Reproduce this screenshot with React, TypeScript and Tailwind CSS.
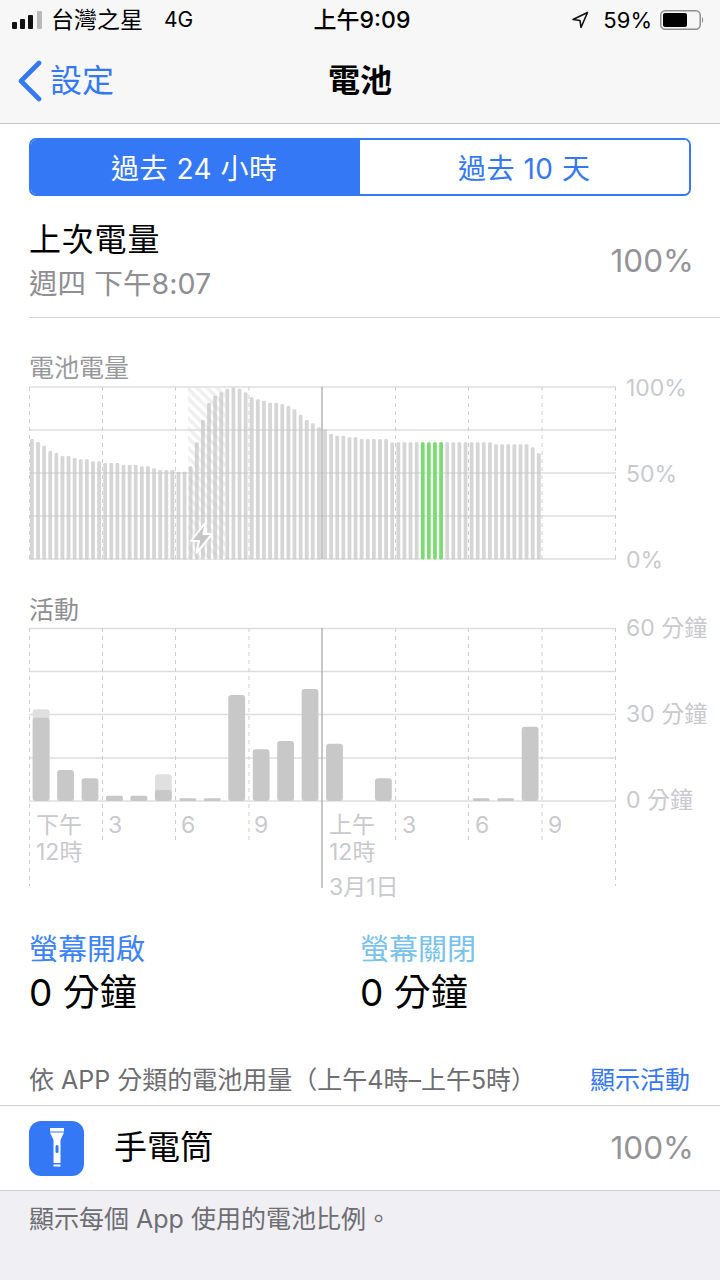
const SANS = "font-['Inter','Noto_Sans_CJK_TC','Noto_Sans',sans-serif]"

const batteryTops = [
	297, 306, 317, 333, 339, 348, 348, 354, 358, 358, 364, 364, 369, 369, 369, 374, 374, 374, 379, 379, 385, 390, 390, 390, 395, 395,
	379, 307, 240, 188, 167, 157, 146, 143, 146, 157, 172, 178, 182, 188, 188, 192, 198, 208, 224, 240, 250, 262, 268, 282, 287, 287, 292, 292,
	297, 297, 297, 297, 297, 307, 307, 307, 307, 307, 307, 307, 307, 307, 307, 307, 307, 307, 307, 307, 307, 307, 313, 313, 313, 313, 313, 313, 322, 340,
]
const greenBars = [64, 65, 66, 67]

// dark top, light top (zoomed values, y = 590 + v / 3)
const activityBars: { i: number; top: number; light?: number }[] = [
	{ i: 0, top: 383, light: 358 },
	{ i: 1, top: 540 },
	{ i: 2, top: 565 },
	{ i: 3, top: 617 },
	{ i: 4, top: 617 },
	{ i: 5, top: 600, light: 553 },
	{ i: 6, top: 625 },
	{ i: 7, top: 625 },
	{ i: 8, top: 315 },
	{ i: 9, top: 478 },
	{ i: 10, top: 453 },
	{ i: 11, top: 297 },
	{ i: 12, top: 461 },
	{ i: 14, top: 565 },
	{ i: 18, top: 625 },
	{ i: 19, top: 625 },
	{ i: 20, top: 410 },
]

const ticks = [29.5, 102.5, 175.5, 249, 395.5, 468.5, 542, 615.5]

function StatusBar() {
	return (
		<div className="flex h-[40px] items-center justify-between pl-[12px] pr-[16px] text-[23px] text-black">
			<div className="flex w-[244px] items-center">
				<svg width="31" height="18" viewBox="0 0 31 18" className="mr-[8px]">
					<rect x="0" y="11" width="5" height="7" rx="1" fill="#111" />
					<rect x="8" y="8" width="5" height="10" rx="1" fill="#111" />
					<rect x="16" y="4" width="5" height="14" rx="1" fill="#111" />
					<rect x="25" y="0" width="5" height="18" rx="1" fill="#b9b9b9" />
				</svg>
				<span>台灣之星</span>
				<span className="ml-[21px] text-[21px]">4G</span>
			</div>
			<div className="text-[23px] font-medium">上午9:09</div>
			<div className="flex w-[236px] items-center justify-end">
				<svg width="18" height="18" viewBox="0 0 18 18" className="mr-[14px]">
					<path d="M16.5 1.5 L2 8.5 L9 9.5 L10 16.5 Z" fill="none" stroke="#111" strokeWidth="1.6" strokeLinejoin="round" />
				</svg>
				<span className="mr-[8px] text-[22px]">59%</span>
				<svg width="44" height="20" viewBox="0 0 44 20">
					<rect x="0.75" y="0.75" width="39.5" height="18.5" rx="4.5" fill="none" stroke="#8e8e8e" strokeWidth="1.5" />
					<rect x="3" y="3" width="24" height="14" rx="2" fill="#000" />
					<path d="M42 7 C43.5 7.5 43.5 12.5 42 13 Z" fill="#8e8e8e" />
				</svg>
			</div>
		</div>
	)
}

function NavBar() {
	return (
		<div className="relative flex h-[84px] items-center justify-center border-b border-[#c4c4c6] pb-[2px]">
			<div className="absolute left-[17px] top-[20px] flex items-center text-[#3478f6]">
				<svg width="25" height="42" viewBox="0 0 25 42">
					<path d="M22 3 L4 21 L22 39" fill="none" stroke="currentColor" strokeWidth="4.6" strokeLinecap="round" strokeLinejoin="round" />
				</svg>
				<span className="ml-[8px] text-[32px] leading-none">設定</span>
			</div>
			<span className="text-[32px] font-semibold leading-none text-black">電池</span>
		</div>
	)
}

function AxisLabels({ labels }: { labels: string[] }) {
	return (
		<div className="-mt-[6px] flex h-[200px] flex-col justify-between pl-[6px] text-[23px] leading-[28px] text-[#c9c9ce]">
			{labels.map((label) => (
				<div key={label} className="whitespace-nowrap">{label}</div>
			))}
		</div>
	)
}

function BatteryChart() {
	return (
		<div className="flex items-start">
			<svg width="620" height="190" viewBox="0 380 620 190" className="block shrink-0">
				<defs>
					<pattern id="hatch" width="7" height="7" patternUnits="userSpaceOnUse" patternTransform="rotate(45)">
						<rect width="7" height="3.5" fill="#efefef" />
					</pattern>
				</defs>
				{[387, 430, 473, 516, 559].map((y) => (
					<line key={y} x1="29" x2="616" y1={y} y2={y} stroke="#dedede" strokeWidth="1.5" />
				))}
				{ticks.map((x) => (
					<line key={x} x1={x} x2={x} y1="387" y2="559" stroke="#cfcfcf" strokeWidth="1" strokeDasharray="4 4" />
				))}
				<rect x="188" y="388" width="37" height="171" fill="#ffffff" />
				<rect x="188" y="388" width="37" height="171" fill="url(#hatch)" />
				<line x1="188" x2="225" y1="430" y2="430" stroke="#dedede" strokeWidth="1.5" />
				<line x1="188" x2="225" y1="473" y2="473" stroke="#dedede" strokeWidth="1.5" />
				<line x1="188" x2="225" y1="516" y2="516" stroke="#dedede" strokeWidth="1.5" />
				<line x1="322" x2="322" y1="387" y2="559" stroke="#a3a3a3" strokeWidth="1.2" />
				{batteryTops.map((t, i) => {
					const x = 30 + i * 6.107
					const y = 340 + t / 3
					const green = greenBars.includes(i)
					return <rect key={i} x={x} y={y} width="3.8" height={559.5 - y} rx="1.4" fill={green ? "#7cdc74" : "#c7c7c7"} fillOpacity={green ? 1 : 0.73} />
				})}
				<path d="M206 522 L191 541 L199 541 L196.5 553 L212 534 L203.5 534 Z" fill="#c6c6c6" stroke="#ffffff" strokeWidth="2" strokeLinejoin="round" />
			</svg>
			<AxisLabels labels={["100%", "50%", "0%"]} />
		</div>
	)
}

function ActivityChart() {
	return (
		<div className="flex items-start">
			<svg width="620" height="280" viewBox="0 620 620 280" className="block shrink-0">
				{[628.5, 671.5, 714.5, 758, 801].map((y) => (
					<line key={y} x1="29" x2="616" y1={y} y2={y} stroke="#dedede" strokeWidth="1.5" />
				))}
				{ticks.map((x, i) => (
					<line key={x} x1={x} x2={x} y1="628" y2={i === 0 || i === 7 ? 886 : 844} stroke="#cfcfcf" strokeWidth="1" strokeDasharray="4 4" />
				))}
				<line x1="322" x2="322" y1="628" y2="888" stroke="#a3a3a3" strokeWidth="1.2" />
				{activityBars.map((b) => {
					const x = 32.7 + b.i * 24.45
					const y = 590 + b.top / 3
					return (
						<g key={b.i}>
							{b.light !== undefined && <rect x={x} y={590 + b.light / 3} width="16.8" height={801 - (590 + b.light / 3)} rx="3" fill="#e0e0e0" />}
							<rect x={x} y={y} width="16.8" height={801 - y} rx={801 - y < 6 ? 1.5 : 3} fill="#c8c8c8" />
						</g>
					)
				})}
				<g fill="#c9c9ce" fontSize="23">
					<text x="36" y="833">下午</text>
					<text x="36" y="860">12時</text>
					<text x="108" y="833">3</text>
					<text x="181" y="833">6</text>
					<text x="254" y="833">9</text>
					<text x="329" y="833">上午</text>
					<text x="329" y="860">12時</text>
					<text x="329" y="895">3月1日</text>
					<text x="402" y="833">3</text>
					<text x="475" y="833">6</text>
					<text x="548" y="833">9</text>
				</g>
			</svg>
			<AxisLabels labels={["60 分鐘", "30 分鐘", "0 分鐘"]} />
		</div>
	)
}

function FlashlightIcon() {
	return (
		<div className="flex h-[55px] w-[55px] items-center justify-center rounded-[12px] bg-[#3478f6]">
			<svg width="24" height="42" viewBox="0 0 24 42">
				<path d="M5 1 H19 V4.5 H5 Z" fill="#fff" />
				<path d="M5 5.5 H19 L15.5 13 V36 H8.5 V13 Z" fill="#fff" />
				<rect x="8.5" y="37.5" width="7" height="2" fill="#fff" />
				<rect x="10.5" y="18" width="3" height="8" rx="1.5" fill="#3478f6" />
			</svg>
		</div>
	)
}

export default function App() {
	return (
		<div className={`h-[1280px] w-[720px] overflow-hidden bg-white ${SANS}`}>
			<div className="bg-[#f7f7f7]">
				<StatusBar />
				<NavBar />
			</div>

			<div className="mx-[29px] mt-[14px] flex h-[58px] overflow-hidden rounded-[7px] border-2 border-[#3478f6] text-[28px] tracking-[0.5px]">
				<div className="flex w-1/2 items-center justify-center bg-[#3478f6] pr-[2px] pt-[3px] text-white">過去 24 小時</div>
				<div className="flex w-[calc(50%+1px)] items-center justify-center bg-white pt-[3px] text-[#3478f6]">過去 10 天</div>
			</div>

			<div className="ml-[29px] flex h-[122px] items-center justify-between border-b border-[#d2d2d4] pr-[26px] pt-[10px]">
				<div>
					<div className="text-[32px] leading-[40px] tracking-[0.8px] text-black">上次電量</div>
					<div className="mt-[4px] text-[28.5px] leading-[40px] tracking-[0.1px] text-[#8e8e93]">週四 下午8:07</div>
				</div>
				<div className="-mt-[2px] text-[31.5px] text-[#949498]">100%</div>
			</div>

			<div className="mt-[35px] pl-[29px] text-[25px] leading-[30px] text-[#98989c]">電池電量</div>
			<div className="-mt-[3px]">
				<BatteryChart />
			</div>

			<div className="mt-[21px] pl-[29px] text-[25px] leading-[30px] text-[#8e8e93]">活動</div>
			<div className="-mt-[5px]">
				<ActivityChart />
			</div>

			<div className="mt-[33px] flex pl-[29px]">
				<div className="w-[331px]">
					<div className="text-[29px] leading-[34px] text-[#3b83f7]">螢幕開啟</div>
					<div className="mt-[4px] text-[37px] leading-[44px] text-black">0 分鐘</div>
				</div>
				<div>
					<div className="text-[29px] leading-[34px] text-[#78c2ee]">螢幕關閉</div>
					<div className="mt-[4px] text-[37px] leading-[44px] text-black">0 分鐘</div>
				</div>
			</div>

			<div className="mt-[42px] flex h-[48px] items-center justify-between pl-[29px] pr-[30px]">
				<span className="text-[25px] text-[#6d6d72]">依 APP 分類的電池用量（上午4時–上午5時）</span>
				<span className="text-[25px] text-[#3478f6]">顯示活動</span>
			</div>

			<div className="flex h-[86px] items-center border-y border-[#cfcfd2] pl-[29px] pr-[26px]">
				<FlashlightIcon />
				<span className="ml-[30px] text-[33px] text-black">手電筒</span>
				<span className="ml-auto text-[31.5px] text-[#949498]">100%</span>
			</div>

			<div className="h-[90px] bg-[#efeff4] pl-[29px] pt-[12px] text-[25px] leading-[32px] text-[#6d6d72]">顯示每個 App 使用的電池比例。</div>
		</div>
	)
}
